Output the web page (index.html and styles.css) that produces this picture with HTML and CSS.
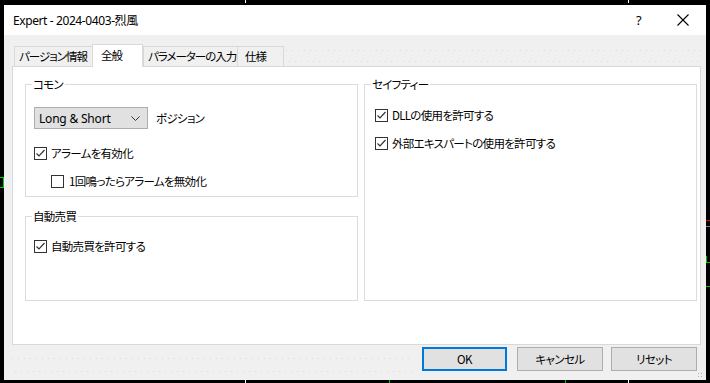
FILE: index.html
```html
<!DOCTYPE html>
<html lang="ja">
<head>
  <meta charset="UTF-8">
  <title>Expert - 2024-0403-烈風</title>
  <link rel="stylesheet" href="styles.css">
</head>
<body>

  <div class="chart">
    <!-- bits of the chart behind the dialog -->
    <span class="mark mark-green-left"></span>
    <span class="mark mark-red-right"></span>
    <span class="mark mark-gray-right"></span>
    <span class="mark mark-green-right"></span>
    <span class="mark mark-green-right2"></span>
    <span class="mark tick" style="left: 245px; top: 0;"></span>
    <span class="mark tick" style="left: 628px; top: 0;"></span>
    <span class="mark tick" style="left: 245px; top: 380px;"></span>
    <span class="mark tick green" style="left: 389px; top: 380px;"></span>
    <span class="mark tick green" style="left: 565px; top: 380px;"></span>
    <span class="mark tick" style="left: 628px; top: 380px;"></span>

    <div class="dialog">
      <div class="titlebar">
        <span class="title">Expert - 2024-0403-烈風</span>
        <span class="help">?</span>
        <span class="close">
          <svg width="12" height="12" viewBox="0 0 12 12"><path d="M0.5 0.5 L11.5 11.5 M11.5 0.5 L0.5 11.5" stroke="#000" stroke-width="1.1" fill="none"/></svg>
        </span>
      </div>

      <div class="body">
        <div class="tabs">
          <div class="tab tab-1">パージョン情報</div>
          <div class="tab tab-active">全般</div>
          <div class="tab tab-3">パラメーターの入力</div>
          <div class="tab tab-4">仕様</div>
          <div class="tab-fill"></div>
        </div>

        <div class="panel">
          <div class="col">
            <div class="group group-common">
              <span class="legend">コモン</span>
              <div class="row">
                <div class="select">
                  <span>Long &amp; Short</span>
                  <svg width="9" height="5" viewBox="0 0 9 5"><path d="M0.5 0.5 L4.5 4.5 L8.5 0.5" stroke="#333" stroke-width="1" fill="none"/></svg>
                </div>
                <span class="select-label">ポジション</span>
              </div>
              <label class="check check-alarm"><span class="box"><svg width="11" height="11" viewBox="0 0 11 11"><path d="M1.5 5.5 L4 8 L9.5 2" stroke="#333" stroke-width="1.2" fill="none"/></svg></span>アラームを有効化</label>
              <label class="check check-sub"><span class="box"></span>1回鳴ったらアラームを無効化</label>
            </div>

            <div class="group group-auto">
              <span class="legend">自動売買</span>
              <label class="check check-first"><span class="box"><svg width="11" height="11" viewBox="0 0 11 11"><path d="M1.5 5.5 L4 8 L9.5 2" stroke="#333" stroke-width="1.2" fill="none"/></svg></span>自動売買を許可する</label>
            </div>
          </div>

          <div class="col">
            <div class="group group-safety">
              <span class="legend">セイフティー</span>
              <label class="check check-dll"><span class="box"><svg width="11" height="11" viewBox="0 0 11 11"><path d="M1.5 5.5 L4 8 L9.5 2" stroke="#333" stroke-width="1.2" fill="none"/></svg></span>DLLの使用を許可する</label>
              <label class="check check-ext"><span class="box"><svg width="11" height="11" viewBox="0 0 11 11"><path d="M1.5 5.5 L4 8 L9.5 2" stroke="#333" stroke-width="1.2" fill="none"/></svg></span>外部エキスパートの使用を許可する</label>
            </div>
          </div>
        </div>

        <div class="footer">
          <div class="footer-fill"></div>
          <button class="btn btn-ok">OK</button>
          <button class="btn">キャンセル</button>
          <button class="btn">リセット</button>
        </div>
        <span class="grip"></span>
      </div>
    </div>
  </div>

</body>
</html>
```

FILE: styles.css
```css
html, body {
  margin: 0;
  padding: 0;
  background: #000;
}

body {
  font-family: "Noto Sans CJK JP", "Noto Sans", sans-serif;
  font-size: 11.5px;
  letter-spacing: -0.7px;
  color: #000;
  font-feature-settings: "palt";
}

.chart {
  position: relative;
  width: 710px;
  height: 383px;
  padding: 5px 4px 3px 4px;
  box-sizing: border-box;
}

.mark {
  position: absolute;
  display: block;
}

.mark-green-left {
  left: 0;
  top: 177px;
  width: 3px;
  height: 9px;
  border: 1px solid #00d000;
  border-left: none;
}

.mark-red-right {
  left: 706px;
  top: 220px;
  width: 4px;
  height: 1px;
  background: #e00000;
}

.mark-gray-right {
  left: 706px;
  top: 226px;
  width: 4px;
  height: 1px;
  background: #8080a0;
}

.mark-green-right {
  left: 706px;
  top: 256px;
  width: 4px;
  height: 7px;
  border-left: 1px solid #00c000;
  border-bottom: 1px solid #00c000;
  box-sizing: border-box;
}

.mark-green-right2 {
  left: 706px;
  top: 286px;
  width: 4px;
  height: 1px;
  background: #00c000;
}

.tick {
  width: 1px;
  height: 3px;
  background: #fff;
}

.tick.green {
  background: #00c000;
}

.dialog {
  width: 702px;
  height: 375px;
  background: #f0f0f0;
  display: flex;
  flex-direction: column;
}

.titlebar {
  height: 30px;
  background: #fff;
  display: flex;
  align-items: center;
  padding-left: 9px;
  flex-shrink: 0;
}

.title {
  flex: 1;
  font-family: "Noto Sans", "Noto Sans CJK JP", sans-serif;
  font-size: 12px;
  letter-spacing: -0.4px;
  margin-top: -1px;
}

.help {
  font-family: "Noto Sans", sans-serif;
  font-size: 13px;
  letter-spacing: 0;
  width: 12px;
  margin-right: 29px;
}

.close {
  display: flex;
  width: 12px;
  height: 12px;
  margin-right: 17px;
}

.body {
  position: relative;
  flex: 1;
  display: flex;
  flex-direction: column;
  padding: 9px 5px 0 8px;
}

.tabs {
  display: flex;
  align-items: flex-end;
  height: 22px;
  padding-left: 2px;
  position: relative;
  z-index: 1;
}

.tab {
  height: 20px;
  box-sizing: border-box;
  border: 1px solid #d9d9d9;
  border-bottom: none;
  background: #f0f0f0;
  line-height: 19px;
  padding-left: 4px;
  white-space: nowrap;
  overflow: hidden;
  letter-spacing: -1px;
}

.tab-1 { width: 78px; border-right: none; }
.tab-3 { width: 95px; padding-left: 4px; }
.tab-4 { width: 46px; border-left: none; padding-left: 7px; }

.tab-active {
  width: 51px;
  height: 23px;
  margin-bottom: -1px;
  background: #fff;
  line-height: 20px;
  padding-left: 8px;
}

.tab-fill {
  flex: 1;
  height: 20px;
  background-image:
    linear-gradient(to right, #dadada 1px, transparent 1px),
    linear-gradient(to right, #dadada 1px, transparent 1px);
  background-size: 6px 1px, 6px 1px;
  background-repeat: repeat-x;
  background-position: 2px 4px, 5px 15px;
}

.panel {
  height: 279px;
  box-sizing: border-box;
  background: #fff;
  border: 1px solid #d9d9d9;
  display: flex;
  gap: 6px;
  padding: 17px 3px 0 12px;
}

.col {
  width: 333px;
  display: flex;
  flex-direction: column;
  gap: 19px;
}

.group {
  position: relative;
  padding: 0 0 0 8px;
  border: 1px solid #dcdcdc;
  box-sizing: border-box;
}

.legend {
  position: absolute;
  top: -9px;
  left: 6px;
  padding: 0 2px 0 1px;
  line-height: 16px;
  background: #fff;
}

.group-common { height: 113px; }
.group-auto { height: 85px; }
.group-safety { height: 217px; }

.row {
  display: flex;
  align-items: center;
  margin-top: 22px;
}

.select {
  width: 114px;
  height: 22px;
  box-sizing: border-box;
  background: #e1e1e1;
  border: 1px solid #adadad;
  display: flex;
  align-items: center;
  justify-content: space-between;
  padding: 0 7px 0 4px;
  font-family: "Noto Sans", sans-serif;
  font-size: 12px;
  letter-spacing: -0.2px;
}

.select-label {
  margin-left: 8px;
}

.check {
  display: flex;
  align-items: center;
  height: 16px;
  white-space: nowrap;
}

.box {
  width: 13px;
  height: 13px;
  box-sizing: border-box;
  border: 1px solid #333;
  background: #fff;
  margin-right: 4px;
  display: flex;
  align-items: center;
  justify-content: center;
  flex-shrink: 0;
}

.check-alarm { margin-top: 16px; }
.check-sub { margin-top: 12px; margin-left: 17px; }
.check-sub .box { margin-right: 5px; }
.check-first { margin-top: 21px; }
.check-dll { margin-top: 22px; margin-left: 2px; }
.check-ext { margin-top: 12px; margin-left: 2px; }

.footer {
  display: flex;
  align-items: flex-start;
  gap: 8px;
  margin-top: 2px;
  padding-right: 4px;
}

.footer-fill {
  flex: 1;
  height: 26px;
  margin-right: 2px;
  background-image:
    linear-gradient(to right, #dadada 1px, transparent 1px),
    linear-gradient(to right, #dadada 1px, transparent 1px);
  background-size: 6px 1px, 6px 1px;
  background-repeat: repeat-x;
  background-position: 0 11px, 3px 24px;
}

.btn {
  width: 86px;
  height: 24px;
  box-sizing: border-box;
  background: #e1e1e1;
  border: 1px solid #adadad;
  font-family: "Noto Sans CJK JP", "Noto Sans", sans-serif;
  font-size: 11.5px;
  letter-spacing: -0.6px;
  font-feature-settings: "palt";
  color: #000;
  padding: 0;
  margin: 0;
}

.btn-ok {
  width: 85px;
  margin-right: 2px;
  border: 2px solid #0078d7;
}

.grip {
  position: absolute;
  right: 2px;
  bottom: 1px;
  width: 7px;
  height: 7px;
  background-image: radial-gradient(circle, #b4b4b4 0.8px, transparent 1px);
  background-size: 3px 3px;
}
```
